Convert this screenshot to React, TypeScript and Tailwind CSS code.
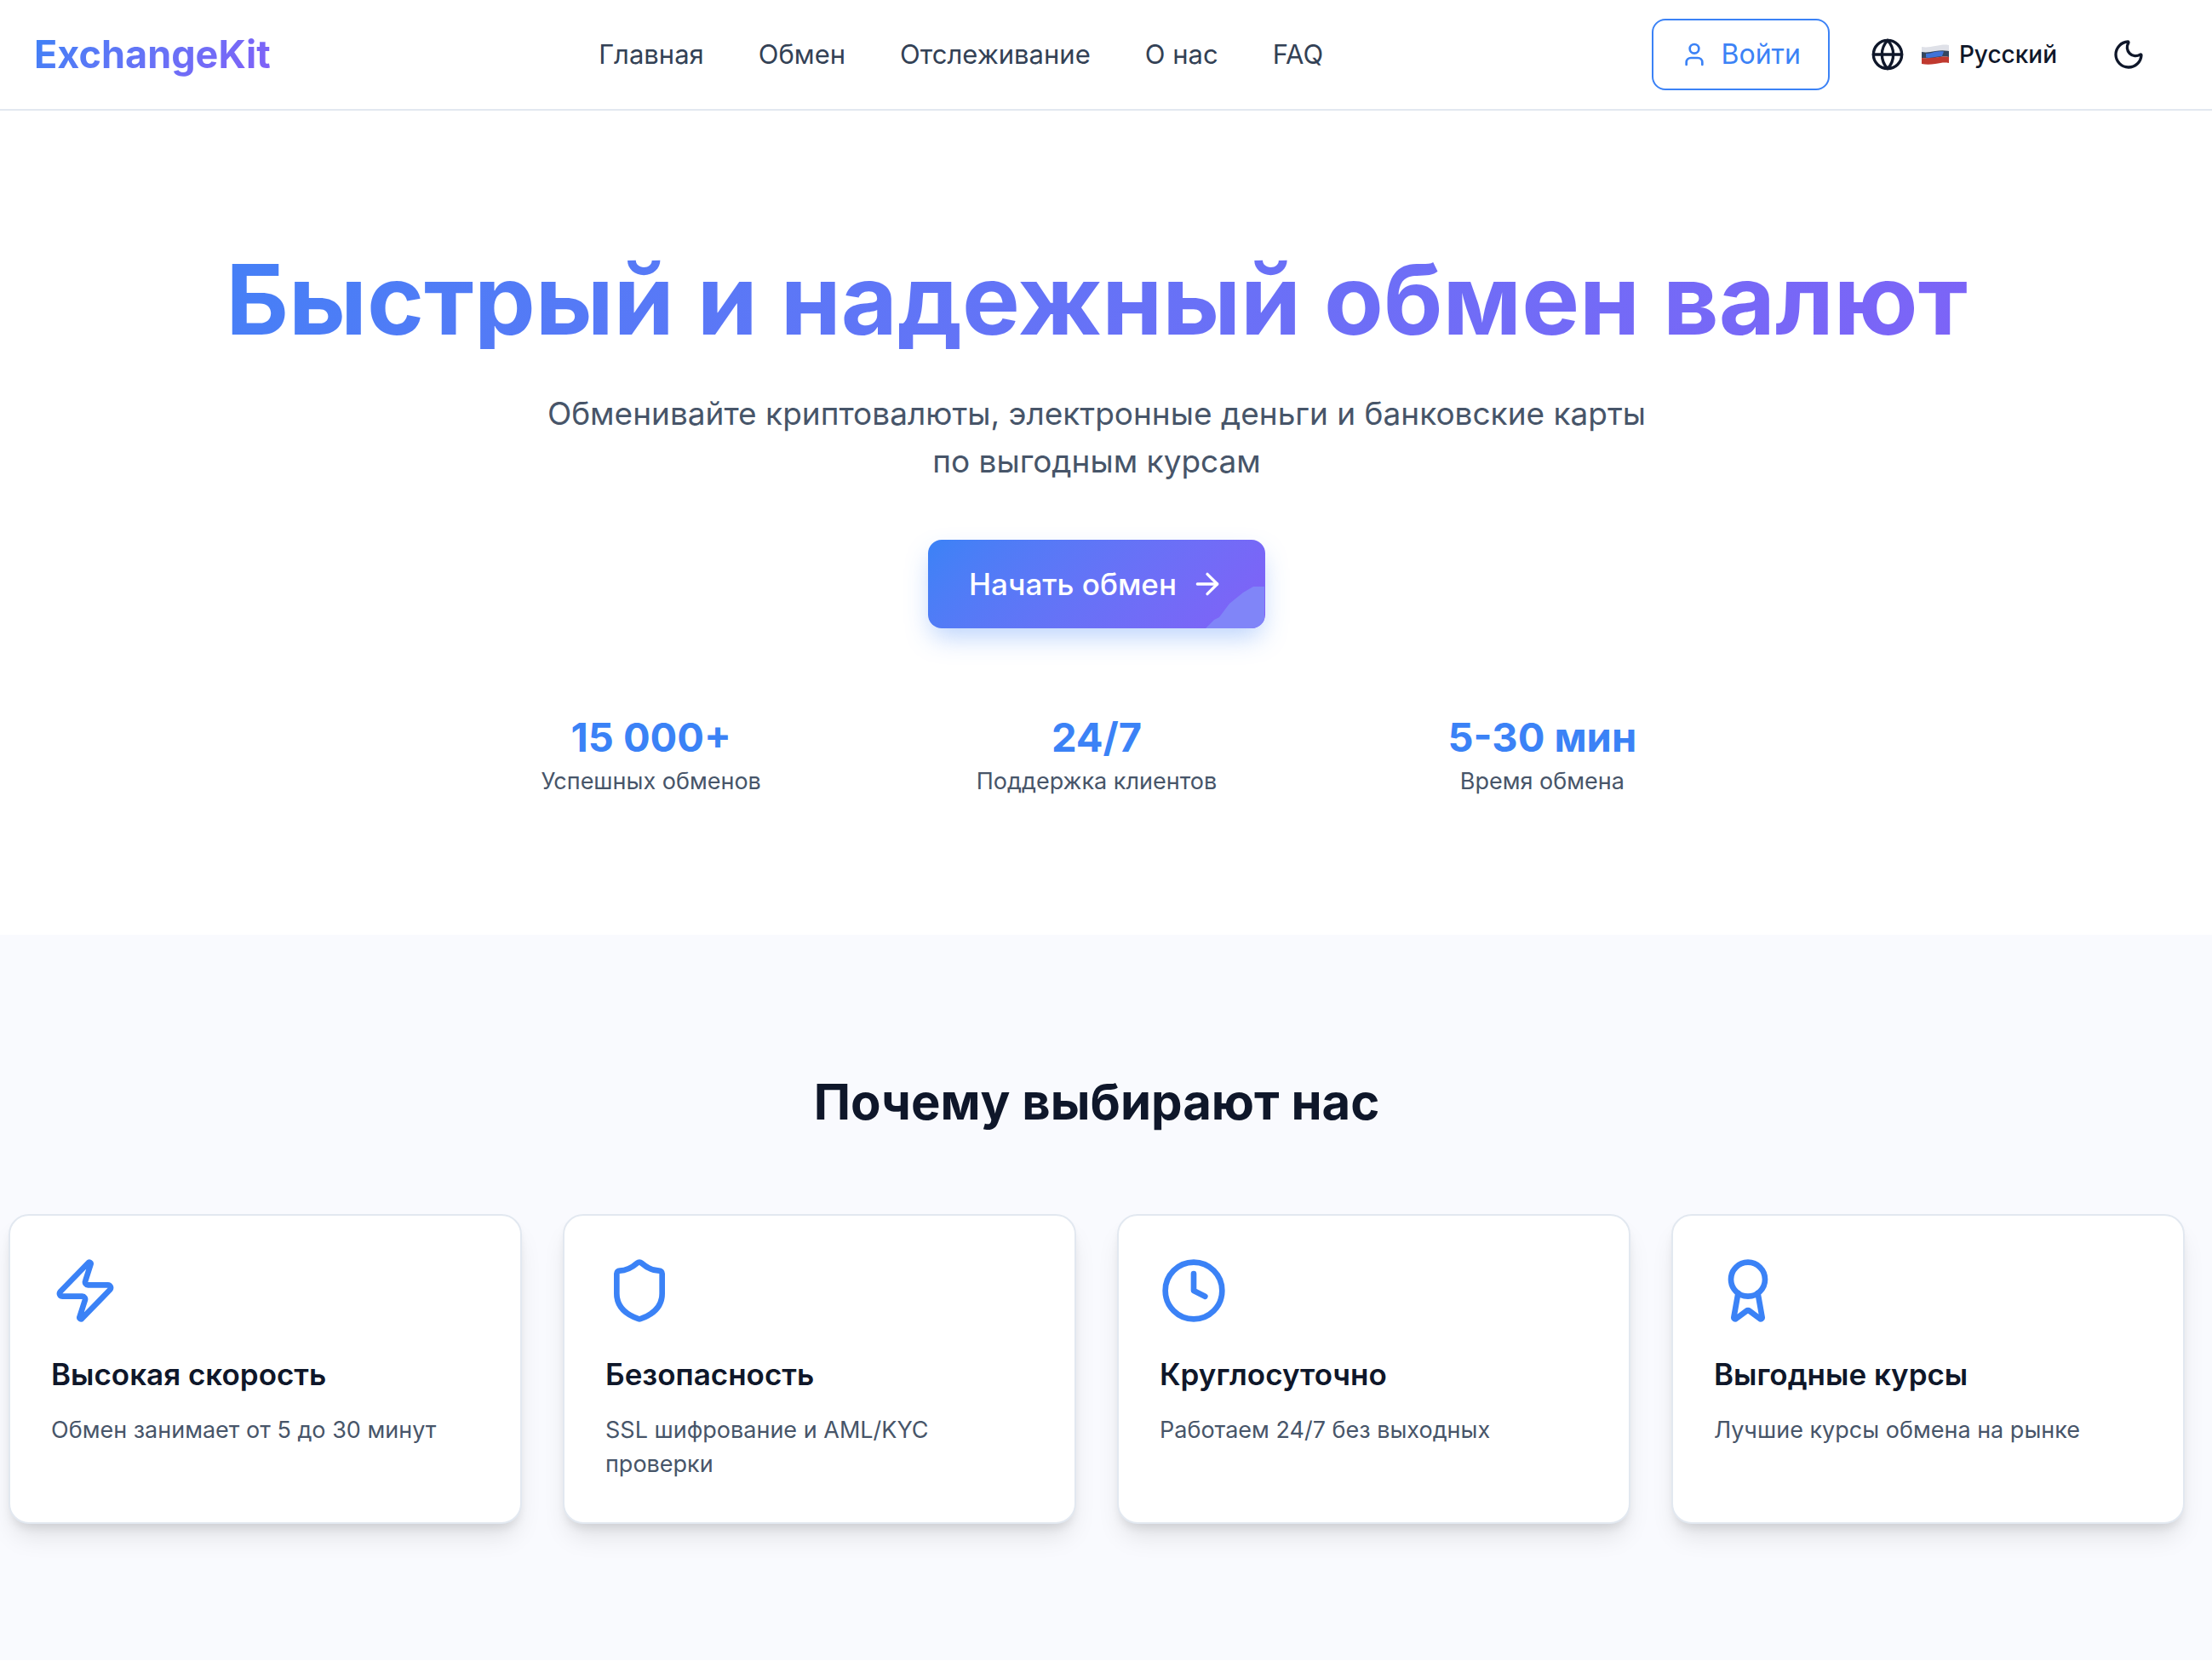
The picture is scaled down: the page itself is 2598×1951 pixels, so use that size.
import { ArrowRight, Award, Clock, Globe, Moon, Shield, User, Zap, type LucideIcon } from "lucide-react";

interface Stat {
    value: string;
    label: string;
}

interface Feature {
    icon: LucideIcon;
    title: string;
    text: string;
}

const NAV_LINKS = ["Главная", "Обмен", "Отслеживание", "О нас", "FAQ"];

const STATS: Stat[] = [
    { value: "15 000+", label: "Успешных обменов" },
    { value: "24/7", label: "Поддержка клиентов" },
    { value: "5-30 мин", label: "Время обмена" },
];

const FEATURES: Feature[] = [
    { icon: Zap, title: "Высокая скорость", text: "Обмен занимает от 5 до 30 минут" },
    { icon: Shield, title: "Безопасность", text: "SSL шифрование и AML/KYC проверки" },
    { icon: Clock, title: "Круглосуточно", text: "Работаем 24/7 без выходных" },
    { icon: Award, title: "Выгодные курсы", text: "Лучшие курсы обмена на рынке" },
];

function RussianFlag() {
    return (
        <svg viewBox="0 0 32 24" className="h-6 w-8" aria-hidden="true">
            <path d="M0 3C6 4 10 3 16 2S27 0 32 1V8C27 7 22 8 16 9S5 10 0 9Z" fill="#dfe1e8" />
            <path d="M0 9C6 10 10 9 16 8S27 7 32 8V15C27 14 22 15 16 16S5 17 0 16Z" fill="#34465f" />
            <path d="M5 11C10 11 14 9 18 8.500S23 8 26 8.500L24 14C20 14 17 15 13 15.500S7 16 5 15.500Z" fill="#3f73d8" />
            <path d="M0 16C6 17 10 16 16 15.500S27 14 32 15V22C27 21 22 22 16 23S5 24 0 23Z" fill="#c0392f" />
        </svg>
    );
}

function Header() {
    return (
        <header className="border-b-2 border-[#e2e8f0] bg-white">
            <div className="mr-[22px] flex h-32 items-center justify-between px-10">
                <a
                    href="#"
                    className="bg-linear-135 from-[#3b82f6] to-[#8160f7] bg-clip-text text-[45px] leading-[58px] font-bold text-transparent"
                >
                    ExchangeKit
                </a>
                <nav className="flex gap-16">
                    {NAV_LINKS.map((link) => (
                        <a key={link} href="#" className="text-[31px] leading-[48px] text-[#334155]">
                            {link}
                        </a>
                    ))}
                </nav>
                <div className="flex items-center gap-8">
                    <button className="flex h-[84px] items-center gap-4 rounded-2xl border-2 border-[#3b82f6] px-8 text-[32px] text-[#3b82f6]">
                        <User size={32} />
                        Войти
                    </button>
                    <button className="flex items-center gap-5 p-4 text-[28px] font-medium">
                        <Globe size={40} />
                        <span className="flex items-center gap-3">
                            <RussianFlag />
                            Русский
                        </span>
                    </button>
                    <button className="p-4" aria-label="Тёмная тема">
                        <Moon size={40} />
                    </button>
                </div>
            </div>
        </header>
    );
}

function Hero() {
    return (
        <section className="mr-[22px] flex flex-col items-center px-10 pt-[175px] pb-40 text-center">
            {/* Tight line box: the gradient is cut off just above and below the letters */}
            <h1 className="w-full bg-linear-135 from-[#3b82f6] to-[#8160f7] bg-clip-text pb-3 text-[114px] leading-[93px] font-bold text-transparent">
                Быстрый и надежный обмен валют
            </h1>
            <p className="mt-12 max-w-[1340px] text-[37px] leading-[56px] text-[#475569]">
                Обменивайте криптовалюты, электронные деньги и банковские карты по выгодным курсам
            </p>
            <button className="relative mt-16 flex h-[104px] items-center gap-4 overflow-hidden rounded-2xl bg-linear-135 from-[#3b82f6] to-[#8160f7] px-12 text-[35px] font-medium text-white shadow-[0_14px_30px_-4px_rgba(59,130,246,0.35)]">
                {/* Highlight in the corner */}
                <svg viewBox="0 0 70 50" className="absolute right-0 bottom-0 h-[50px] w-[70px]" aria-hidden="true">
                    <path d="M0 50L10 40L16 37L28 21L44 8L56 1H69V50Z" fill="#8085f8" />
                </svg>
                Начать обмен
                <ArrowRight size={40} />
            </button>
            <dl className="mt-24 grid w-full max-w-[1506px] grid-cols-3 gap-16">
                {STATS.map((stat) => (
                    <div key={stat.label} className="flex flex-col-reverse">
                        <dt className="text-[27px] leading-10 text-[#475569]">{stat.label}</dt>
                        <dd className="text-[47px] leading-16 font-bold text-[#3b82f6]">{stat.value}</dd>
                    </div>
                ))}
            </dl>
        </section>
    );
}

function FeatureCard({ icon: Icon, title, text }: Feature) {
    return (
        <article className="rounded-3xl border-2 border-[#e2e8f0] bg-white p-12 shadow-[0_20px_30px_-6px_rgba(0,0,0,0.1),0_8px_12px_-4px_rgba(0,0,0,0.1)]">
            <Icon size={80} className="text-[#3b82f6]" />
            <h3 className="mt-8 mb-5 text-[35px] leading-[52px] font-semibold">{title}</h3>
            <p className="text-[27px] leading-10 text-[#475569]">{text}</p>
        </article>
    );
}

export default function App() {
    return (
        <div className="min-h-screen bg-white font-['Inter',sans-serif] text-[#0f172a]">
            <Header />
            <main>
                <Hero />
                <section className="bg-[#f9fafe] py-40">
                    <div className="mr-[22px] px-[10px]">
                        <h2 className="mb-24 text-center text-[58px] leading-[72px] font-bold">Почему выбирают нас</h2>
                        <div className="grid grid-cols-4 gap-12">
                            {FEATURES.map((feature) => (
                                <FeatureCard key={feature.title} {...feature} />
                            ))}
                        </div>
                    </div>
                </section>
            </main>
        </div>
    );
}
